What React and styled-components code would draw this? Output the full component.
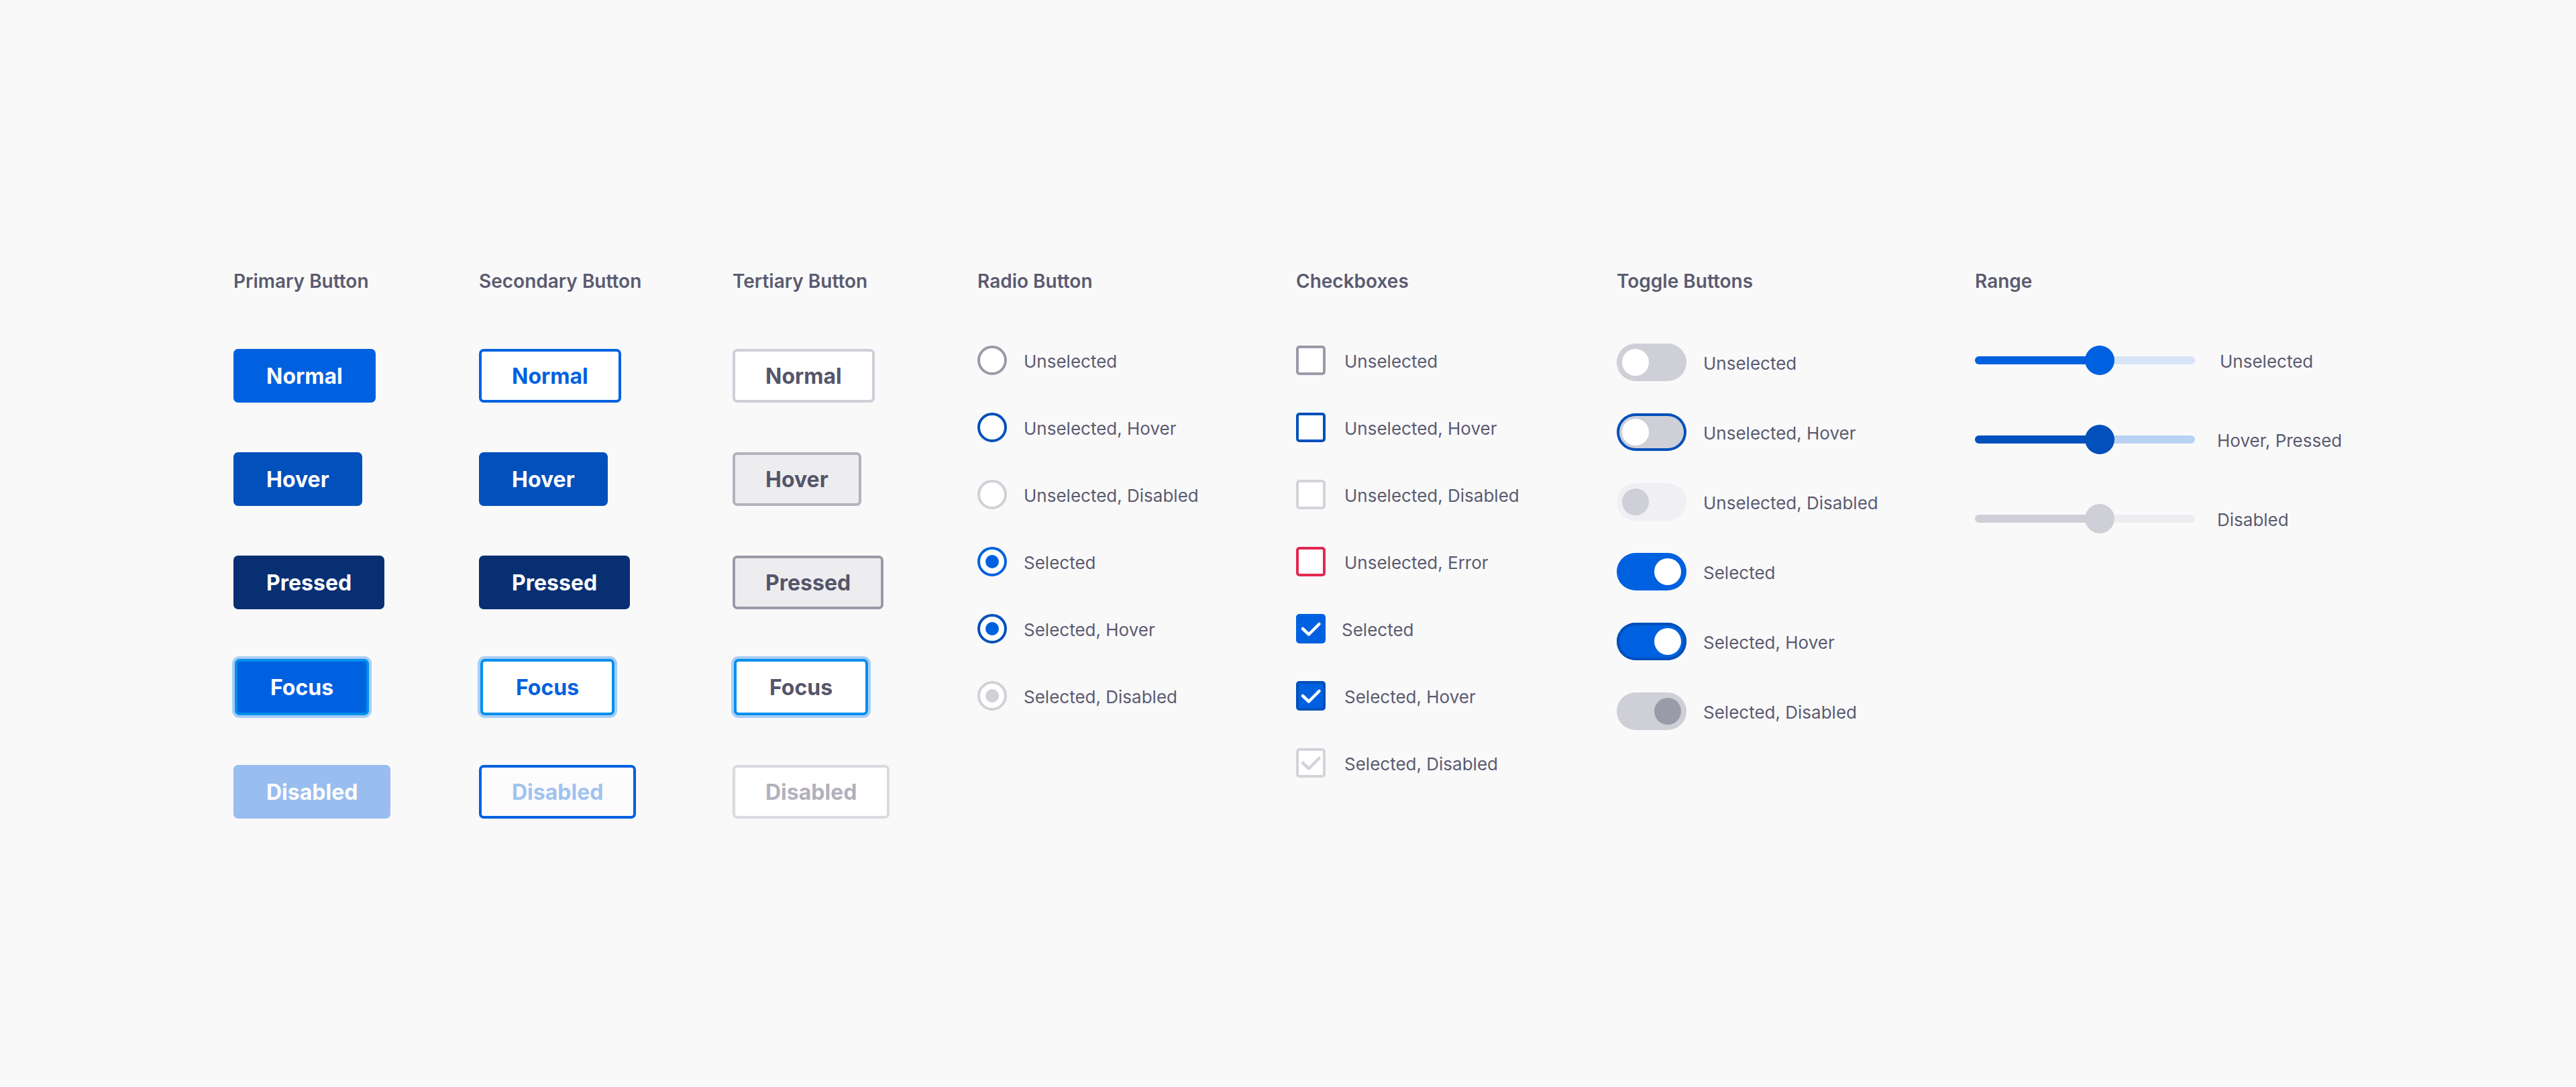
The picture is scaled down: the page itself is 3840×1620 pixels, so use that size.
import React from 'react'
import styled, { createGlobalStyle, css } from 'styled-components'

const GlobalStyle = createGlobalStyle`
  html, body {
    margin: 0;
    padding: 0;
    background: #f9f9fa;
  }
  body {
    font-family: Inter, "Noto Sans", sans-serif;
    -webkit-font-smoothing: antialiased;
  }
`

const blue = '#0061e0'
const blueHover = '#0250bb'
const bluePressed = '#072f72'
const focusBlue = '#0090ed'
const focusRing = '#a9cdf3'
const grey = '#9a9aa8'
const greyLight = '#cfcfd8'
const greyLighter = '#ededf0'
const text = '#5b5b70'

const buttonColors = {
  primary: {
    normal: { bg: blue, border: blue, color: '#fff' },
    hover: { bg: blueHover, border: blueHover, color: '#fff' },
    pressed: { bg: bluePressed, border: bluePressed, color: '#fff' },
    focus: { bg: blue, border: focusBlue, color: '#fff' },
    disabled: { bg: '#99bdef', border: '#99bdef', color: '#fff' },
  },
  secondary: {
    normal: { bg: '#fff', border: blue, color: blue },
    hover: { bg: blueHover, border: blueHover, color: '#fff' },
    pressed: { bg: bluePressed, border: bluePressed, color: '#fff' },
    focus: { bg: '#fff', border: focusBlue, color: blue },
    disabled: { bg: '#fcfcfd', border: blue, color: '#a0c2f0' },
  },
  tertiary: {
    normal: { bg: '#fff', border: greyLight, color: '#55556a' },
    hover: { bg: greyLighter, border: '#b3b3be', color: '#55556a' },
    pressed: { bg: greyLighter, border: grey, color: '#55556a' },
    focus: { bg: '#fff', border: focusBlue, color: '#55556a' },
    disabled: { bg: '#fff', border: '#dadae0', color: '#b1b1bc' },
  },
}

const states = [
  { key: 'normal', label: 'Normal' },
  { key: 'hover', label: 'Hover' },
  { key: 'pressed', label: 'Pressed' },
  { key: 'focus', label: 'Focus' },
  { key: 'disabled', label: 'Disabled' },
]

const Page = styled.div`
  min-height: 1620px;
  box-sizing: border-box;
  padding: 402px 0 0 348px;
`

const Board = styled.div`
  display: grid;
  grid-template-columns: 366px 378px 365px 475px 478px 534px auto;
  align-items: start;
`

const Column = styled.section`
  display: flex;
  flex-direction: column;
`

const Heading = styled.h3`
  margin: 0;
  font-size: 28px;
  line-height: 34px;
  font-weight: 600;
  color: #5b5b6f;
`

const ButtonStack = styled.div`
  display: flex;
  flex-direction: column;
  align-items: flex-start;
  gap: 74px;
  margin-top: 84px;
`

const Button = styled.button`
  box-sizing: border-box;
  height: 80px;
  padding: 0 45px;
  border-radius: 7px;
  border: 4px solid ${({ $c }) => $c.border};
  background: ${({ $c }) => $c.bg};
  color: ${({ $c }) => $c.color};
  font-family: Inter, sans-serif;
  font-size: 32px;
  font-weight: 700;
  cursor: pointer;
  ${({ $focus }) =>
    $focus &&
    css`
      height: 84px;
      padding: 0 49px;
      margin-left: 2px;
      box-shadow: 0 0 0 4px ${focusRing};
    `}
`

const List = styled.div`
  display: flex;
  flex-direction: column;
  margin-top: ${({ $top }) => $top}px;
`

const Row = styled.div`
  display: flex;
  align-items: center;
  height: ${({ $h }) => $h}px;
  gap: ${({ $gap }) => $gap || 25}px;
`

const Label = styled.span`
  font-size: 26px;
  line-height: 32px;
  margin-top: 4px;
  color: ${text};
  margin-left: ${({ $shift }) => $shift || 0}px;
`

const Radio = styled.span`
  box-sizing: border-box;
  width: 44px;
  height: 44px;
  border-radius: 50%;
  background: #fff;
  border: 4px solid ${({ $ring }) => $ring};
  display: flex;
  align-items: center;
  justify-content: center;
  flex-shrink: 0;
  &::after {
    content: '';
    display: ${({ $dot }) => ($dot ? 'block' : 'none')};
    width: 20px;
    height: 20px;
    border-radius: 50%;
    background: ${({ $dot }) => $dot};
  }
`

const Box = styled.span`
  box-sizing: border-box;
  width: 44px;
  height: 44px;
  border-radius: 5px;
  background: ${({ $fill }) => $fill || '#fff'};
  border: 4px solid ${({ $border }) => $border};
  display: flex;
  align-items: center;
  justify-content: center;
  flex-shrink: 0;
  svg {
    display: block;
  }
`

const Track = styled.span`
  box-sizing: border-box;
  width: 104px;
  height: 56px;
  border-radius: 28px;
  padding: 0 8px;
  display: flex;
  align-items: center;
  justify-content: ${({ $on }) => ($on ? 'flex-end' : 'flex-start')};
  background: ${({ $bg }) => $bg};
  box-shadow: ${({ $outline }) => ($outline ? `inset 0 0 0 4px ${$outline}` : 'none')};
  flex-shrink: 0;
`

const Knob = styled.span`
  width: 40px;
  height: 40px;
  border-radius: 50%;
  background: ${({ $bg }) => $bg};
`

const Slider = styled.div`
  position: relative;
  width: 328px;
  height: 12px;
  border-radius: 6px;
  background: ${({ $rest }) => $rest};
  flex-shrink: 0;
`

const SliderFill = styled.div`
  height: 100%;
  border-radius: 6px;
  background: ${({ $bg }) => $bg};
`

const Thumb = styled.span`
  position: absolute;
  top: 50%;
  width: 44px;
  height: 44px;
  margin: -22px 0 0 -22px;
  border-radius: 50%;
  background: ${({ $bg }) => $bg};
`

const Check = ({ color }) => (
  <svg width="36" height="36" viewBox="0 0 36 36">
    <polyline
      points="6,18 15,26.5 30.5,11"
      fill="none"
      stroke={color}
      strokeWidth="4.5"
      strokeLinecap="round"
      strokeLinejoin="round"
    />
  </svg>
)

const radios = [
  { label: 'Unselected', ring: grey },
  { label: 'Unselected, Hover', ring: blueHover },
  { label: 'Unselected, Disabled', ring: '#d0d0d7' },
  { label: 'Selected', ring: blue, dot: blue },
  { label: 'Selected, Hover', ring: blueHover, dot: blue },
  { label: 'Selected, Disabled', ring: '#d0d0d7', dot: '#d0d0d7' },
]

const checkboxes = [
  { label: 'Unselected', border: grey },
  { label: 'Unselected, Hover', border: blueHover },
  { label: 'Unselected, Disabled', border: '#d3d3da' },
  { label: 'Unselected, Error', border: '#e22850' },
  { label: 'Selected', border: blue, fill: blue, check: '#fff', shift: -4 },
  { label: 'Selected, Hover', border: blueHover, fill: blue, check: '#fff' },
  { label: 'Selected, Disabled', border: '#d3d3da', check: '#d3d3da' },
]

const toggles = [
  { label: 'Unselected', bg: greyLight, knob: '#fff' },
  { label: 'Unselected, Hover', bg: greyLight, knob: '#fff', outline: blueHover },
  { label: 'Unselected, Disabled', bg: '#f0f0f4', knob: greyLight },
  { label: 'Selected', bg: blue, knob: '#fff', on: true },
  { label: 'Selected, Hover', bg: blue, knob: '#fff', on: true, outline: blueHover },
  { label: 'Selected, Disabled', bg: greyLight, knob: grey, on: true },
]

const ranges = [
  { label: 'Unselected', fill: blue, rest: '#d6e4f7', value: 56.7, gap: 37 },
  { label: 'Hover, Pressed', fill: blueHover, rest: '#b9d2f4', value: 56.7, gap: 33 },
  { label: 'Disabled', fill: greyLight, rest: '#ededf0', value: 56.7, gap: 33 },
]

function ButtonColumn({ title, variant }) {
  return (
    <Column>
      <Heading>{title}</Heading>
      <ButtonStack>
        {states.map((s) => (
          <Button key={s.key} $c={buttonColors[variant][s.key]} $focus={s.key === 'focus'}>
            {s.label}
          </Button>
        ))}
      </ButtonStack>
    </Column>
  )
}

export default function App() {
  return (
    <>
      <GlobalStyle />
      <Page>
        <Board>
          <ButtonColumn title="Primary Button" variant="primary" />
          <ButtonColumn title="Secondary Button" variant="secondary" />
          <ButtonColumn title="Tertiary Button" variant="tertiary" />

          <Column>
            <Heading>Radio Button</Heading>
            <List $top={51}>
              {radios.map((r) => (
                <Row key={r.label} $h={100}>
                  <Radio $ring={r.ring} $dot={r.dot} />
                  <Label>{r.label}</Label>
                </Row>
              ))}
            </List>
          </Column>

          <Column>
            <Heading>Checkboxes</Heading>
            <List $top={51}>
              {checkboxes.map((c) => (
                <Row key={c.label} $h={100} $gap={28}>
                  <Box $border={c.border} $fill={c.fill}>
                    {c.check && <Check color={c.check} />}
                  </Box>
                  <Label $shift={c.shift}>{c.label}</Label>
                </Row>
              ))}
            </List>
          </Column>

          <Column>
            <Heading>Toggle Buttons</Heading>
            <List $top={52}>
              {toggles.map((t) => (
                <Row key={t.label} $h={104}>
                  <Track $bg={t.bg} $on={t.on} $outline={t.outline}>
                    <Knob $bg={t.knob} />
                  </Track>
                  <Label>{t.label}</Label>
                </Row>
              ))}
            </List>
          </Column>

          <Column>
            <Heading>Range</Heading>
            <List $top={42}>
              {ranges.map((r) => (
                <Row key={r.label} $h={118} $gap={r.gap}>
                  <Slider $rest={r.rest}>
                    <SliderFill $bg={r.fill} style={{ width: `${r.value}%` }} />
                    <Thumb $bg={r.fill} style={{ left: `${r.value}%` }} />
                  </Slider>
                  <Label>{r.label}</Label>
                </Row>
              ))}
            </List>
          </Column>
        </Board>
      </Page>
    </>
  )
}
